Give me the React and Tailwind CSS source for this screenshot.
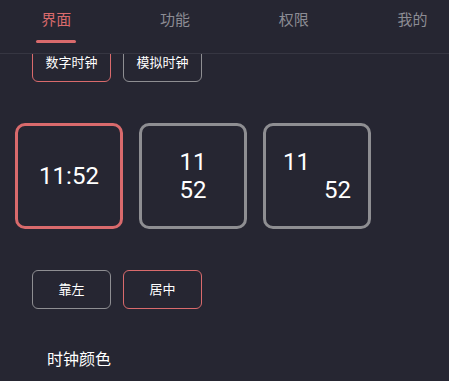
export default function App() {
  const tabs = ['界面', '功能', '权限', '我的']

  return (
    <div
      className="w-[449px] h-[381px] overflow-hidden bg-[#262632] text-white flex flex-col"
      style={{ fontFamily: 'Roboto, "Noto Sans CJK SC", sans-serif' }}
    >
      {/* Tab bar */}
      <div className="h-[54px] shrink-0 border-b border-[#363642] relative z-10 bg-[#262632]">
        <div className="flex ml-[-3px]">
          {tabs.map((t, i) => (
            <div key={t} className="w-[118.7px] shrink-0 flex flex-col items-center">
              <div
                className={`h-[40px] pt-[10px] text-[15px] leading-[20px] ${
                  i === 0 ? 'text-[#d96a6c]' : 'text-[#8c8c94]'
                }`}
              >
                {t}
              </div>
              {i === 0 && <div className="w-[40px] h-[3px] rounded-full bg-[#d96a6c]" />}
            </div>
          ))}
        </div>
      </div>

      {/* Scrolled content */}
      <div className="flex-1 overflow-hidden">
        <div className="mt-[-11px] px-[32px] flex gap-[12px]">
          <button className="w-[79px] h-[39px] rounded-[6px] border-[1.5px] border-[#d96a6c] text-[13px] text-white">
            数字时钟
          </button>
          <button className="w-[79px] h-[39px] rounded-[6px] border-[1.5px] border-[#8e8e92] text-[13px] text-white">
            模拟时钟
          </button>
        </div>

        <div className="mt-[41px] px-[15px] flex gap-[16px]">
          <div className="w-[108px] h-[106px] rounded-[10px] border-[3px] border-[#d96a6c] flex items-center justify-center text-[24px] leading-[28px]">
            11:52
          </div>
          <div className="w-[108px] h-[106px] rounded-[10px] border-[3px] border-[#8e8e92] flex items-center justify-center">
            <div className="flex flex-col text-[24px] leading-[28px]">
              <span>11</span>
              <span>52</span>
            </div>
          </div>
          <div className="w-[108px] h-[106px] rounded-[10px] border-[3px] border-[#8e8e92] flex flex-col justify-center px-[17px] text-[24px] leading-[28px]">
            <span className="self-start">11</span>
            <span className="self-end">52</span>
          </div>
        </div>

        <div className="mt-[41px] px-[32px] flex gap-[12px]">
          <button className="w-[79px] h-[39px] rounded-[6px] border-[1.5px] border-[#8e8e92] text-[13px] text-white">
            靠左
          </button>
          <button className="w-[79px] h-[39px] rounded-[6px] border-[1.5px] border-[#d96a6c] text-[13px] text-white">
            居中
          </button>
        </div>

        <div className="mt-[40px] pl-[47px] text-[16px] leading-[22px] text-white">时钟颜色</div>
      </div>
    </div>
  )
}
